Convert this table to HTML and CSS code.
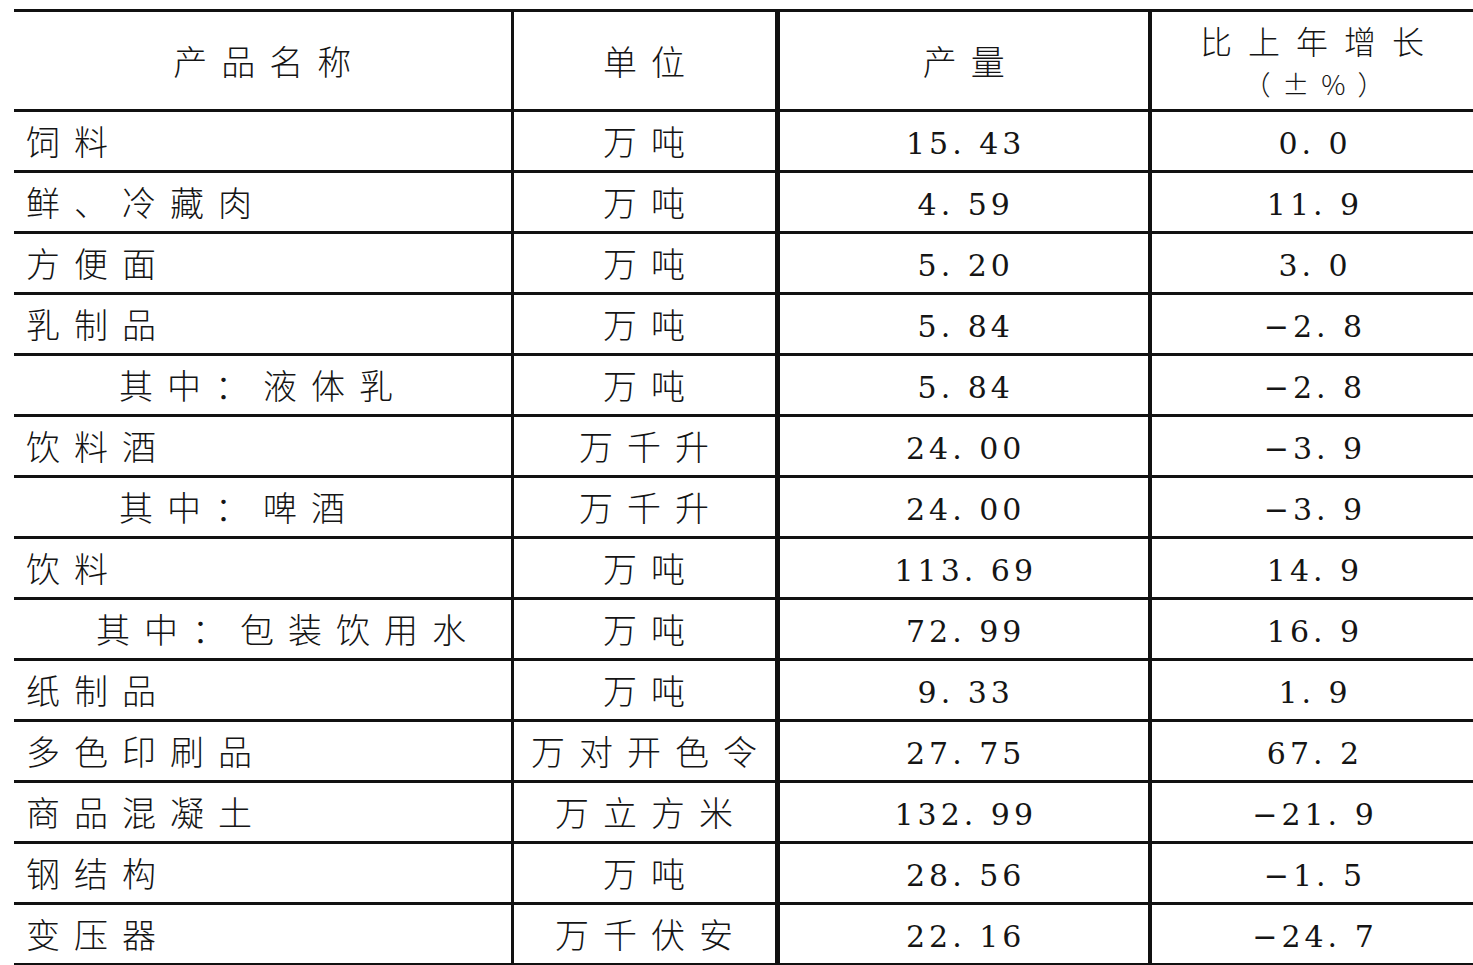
FILE: index.html
```html
<!DOCTYPE html>
<html lang="zh-CN">
<head>
<meta charset="utf-8">
<title>主要工业产品产量</title>
<link rel="stylesheet" href="styles.css">
</head>
<body>
<table class="tbl">
  <colgroup>
    <col class="c1"><col class="c2"><col class="c3"><col class="c4">
  </colgroup>
  <thead>
    <tr class="head">
      <th class="ctr">产品名称</th>
      <th class="ctr">单位</th>
      <th class="ctr">产量</th>
      <th class="ctr"><div class="g1">比上年增长</div><div class="g2">（±%）</div></th>
    </tr>
  </thead>
  <tbody>
    <tr><td class="name">饲料</td><td class="ctr">万吨</td><td class="num">15. 43</td><td class="num">0. 0</td></tr>
    <tr><td class="name">鲜、冷藏肉</td><td class="ctr">万吨</td><td class="num">4. 59</td><td class="num">11. 9</td></tr>
    <tr><td class="name">方便面</td><td class="ctr">万吨</td><td class="num">5. 20</td><td class="num">3. 0</td></tr>
    <tr><td class="name">乳制品</td><td class="ctr">万吨</td><td class="num">5. 84</td><td class="num">−2. 8</td></tr>
    <tr><td class="name sub">其中：液体乳</td><td class="ctr">万吨</td><td class="num">5. 84</td><td class="num">−2. 8</td></tr>
    <tr><td class="name">饮料酒</td><td class="ctr">万千升</td><td class="num">24. 00</td><td class="num">−3. 9</td></tr>
    <tr><td class="name sub">其中：啤酒</td><td class="ctr">万千升</td><td class="num">24. 00</td><td class="num">−3. 9</td></tr>
    <tr><td class="name">饮料</td><td class="ctr">万吨</td><td class="num">113. 69</td><td class="num">14. 9</td></tr>
    <tr><td class="name sub2">其中：包装饮用水</td><td class="ctr">万吨</td><td class="num">72. 99</td><td class="num">16. 9</td></tr>
    <tr><td class="name">纸制品</td><td class="ctr">万吨</td><td class="num">9. 33</td><td class="num">1. 9</td></tr>
    <tr><td class="name">多色印刷品</td><td class="ctr">万对开色令</td><td class="num">27. 75</td><td class="num">67. 2</td></tr>
    <tr><td class="name">商品混凝土</td><td class="ctr">万立方米</td><td class="num">132. 99</td><td class="num">−21. 9</td></tr>
    <tr><td class="name">钢结构</td><td class="ctr">万吨</td><td class="num">28. 56</td><td class="num">−1. 5</td></tr>
    <tr><td class="name">变压器</td><td class="ctr">万千伏安</td><td class="num">22. 16</td><td class="num">−24. 7</td></tr>
  </tbody>
</table>
</body>
</html>
```

FILE: styles.css
```css
html, body {
  margin: 0;
  padding: 0;
  background: #fff;
}
body {
  font-family: "Noto Sans CJK SC", sans-serif;
  color: #151515;
}
.tbl {
  border-collapse: collapse;
  table-layout: fixed;
  width: 1460px;
  margin: 9px 0 0 14px;
}
.c1 { width: 498px; }
.c2 { width: 265px; }
.c3 { width: 373px; }
.c4 { width: 324px; }
.tbl th, .tbl td {
  border-top: 3px solid #111;
  border-bottom: 3px solid #111;
  padding: 0;
  font-weight: 300;
  font-size: 34px;
  line-height: 1.1;
  letter-spacing: 14px;
  vertical-align: middle;
  white-space: nowrap;
}
.tbl tr > :nth-child(2) { border-left: 3px solid #111; }
.tbl tr > :nth-child(3) { border-left: 5px solid #111; }
.tbl tr > :nth-child(4) { border-left: 4px solid #111; }
.head { height: 100px; }
tbody tr { height: 61px; }
.tbl .ctr { text-align: center; padding-left: 14px; }
.tbl .name { text-align: left; padding-left: 12px; }
.tbl .name.sub { padding-left: 105px; }
.tbl .name.sub2 { padding-left: 82px; }
.g1 { font-size: 32px; line-height: 47px; letter-spacing: 16px; }
.g2 { font-size: 27px; line-height: 40px; letter-spacing: 12px; margin-top: -4px; padding-top: 4px; }
.tbl .num {
  font-family: "DejaVu Serif", "Liberation Serif", serif;
  font-size: 30px;
  letter-spacing: 4px;
  text-align: center;
  padding-left: 4px;
  padding-top: 5px;
}
```
